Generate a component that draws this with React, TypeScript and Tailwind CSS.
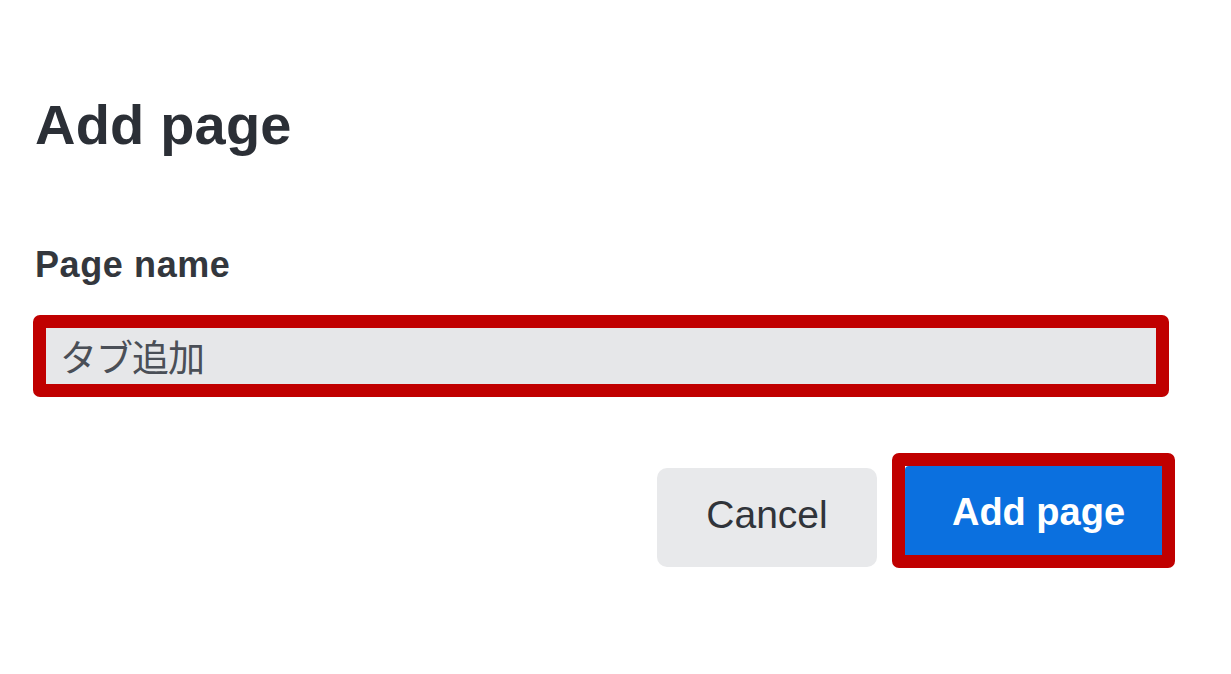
export default function App() {
  return (
    <div className="w-[1231px] h-[674px] bg-white overflow-hidden pl-[33px] pt-[93px] font-['Liberation_Sans',Arial,sans-serif]">
      <h1 className="text-[56px] leading-[64px] font-bold text-[#2b2f36] pl-[2px] tracking-[0.2px]">Add page</h1>
      <div className="mt-[88px] text-[36px] leading-[40px] font-bold text-[#33373d] pl-[2px] tracking-[0.6px]">Page name</div>
      <div className="mt-[30px] w-[1136px] h-[82px] border-[13px] border-[#c00000] rounded-[7px] overflow-hidden">
        <div className="h-full bg-[#e6e7e9] pl-[14px] pt-[4px] overflow-hidden text-[37px] leading-[48px] tracking-[-1px] text-[#4a4f57] font-['Noto_Sans_CJK_JP',sans-serif]">
          タブ追加
        </div>
      </div>
      <div className="w-[1142px] mt-[56px] flex justify-end items-start">
        <button className="mt-[15px] w-[220px] h-[99px] rounded-[10px] bg-[#e8e9eb] text-[39px] text-[#30343a] flex items-center justify-center pb-[4px]">
          Cancel
        </button>
        <div className="ml-[15px] w-[283px] h-[115px] border-[13px] border-[#c00000] rounded-[7px] overflow-hidden">
          <div className="h-full bg-[#0b70df] rounded-tl-[4px] flex items-center justify-center pl-[10px] pt-[3px] text-[38px] font-bold text-white">
            Add page
          </div>
        </div>
      </div>
    </div>
  );
}
